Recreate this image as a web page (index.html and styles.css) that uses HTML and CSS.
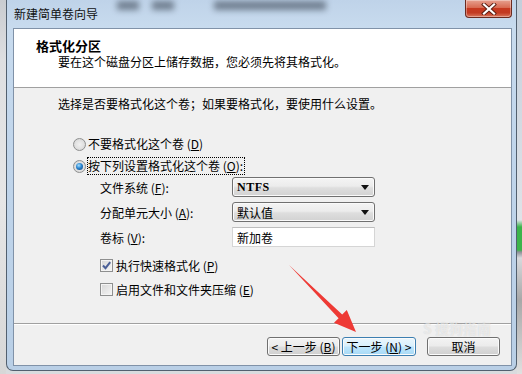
FILE: index.html
```html
<!DOCTYPE html>
<html lang="zh-CN">
<head>
    <meta charset="UTF-8">
    <meta name="viewport" content="width=device-width, initial-scale=1.0">
    <title>新建简单卷向导</title>
    <link rel="stylesheet" href="styles.css">
</head>
<body>
    <div class="screen">
        <div class="desk-left"></div>
        <div class="window">
            <div class="titlebar">
                <span class="title">新建简单卷向导</span>
                <div class="blur">
                    <span class="b1"></span>
                    <span class="b2"></span>
                    <span class="b3"></span>
                </div>
                <button class="close">
                    <svg width="16" height="12" viewBox="0 0 16 12">
                        <path d="M3 1.5 L13 10.5 M13 1.5 L3 10.5" stroke="#5a1d12" stroke-width="4" stroke-linecap="square"/>
                        <path d="M3 1.5 L13 10.5 M13 1.5 L3 10.5" stroke="#ffffff" stroke-width="2.2" stroke-linecap="square"/>
                    </svg>
                </button>
            </div>
            <div class="client">
                <div class="header">
                    <div class="h-title">格式化分区</div>
                    <div class="h-sub">要在这个磁盘分区上储存数据，您必须先将其格式化。</div>
                </div>
                <div class="content">
                    <p class="intro">选择是否要格式化这个卷；如果要格式化，要使用什么设置。</p>
                    <div class="radio-row first">
                        <span class="radio"></span>
                        <span class="opt">不要格式化这个卷 (<u>D</u>)</span>
                    </div>
                    <div class="radio-row">
                        <span class="radio on"></span>
                        <span class="opt focus">按下列设置格式化这个卷 (<u>O</u>):</span>
                    </div>
                    <div class="settings">
                        <span class="lbl">文件系统 (<u>F</u>):</span>
                        <div class="select mono">NTFS<span class="caret"></span></div>
                        <span class="lbl">分配单元大小 (<u>A</u>):</span>
                        <div class="select">默认值<span class="caret"></span></div>
                        <span class="lbl">卷标 (<u>V</u>):</span>
                        <div class="textbox">新加卷</div>
                    </div>
                    <div class="checks">
                        <div class="check-row">
                            <span class="box">
                                <svg width="11" height="11" viewBox="0 0 11 11">
                                    <path d="M2 5.5 L4.5 8.2 L9.2 2.2" fill="none" stroke="#4a5f97" stroke-width="2"/>
                                </svg>
                            </span>
                            <span>执行快速格式化 (<u>P</u>)</span>
                        </div>
                        <div class="check-row">
                            <span class="box"></span>
                            <span>启用文件和文件夹压缩 (<u>E</u>)</span>
                        </div>
                    </div>
                </div>
                <div class="footer">
                    <button class="btn back">&lt; 上一步 (<u>B</u>)</button>
                    <button class="btn next">下一步 (<u>N</u>) &gt;</button>
                    <button class="btn cancel">取消</button>
                </div>
            </div>
        </div>
        <div class="desk-right"></div>

        <span class="watermark">S 搜狗指南</span>
        <svg class="arrow" width="522" height="374" viewBox="0 0 522 374">
            <polygon points="289,265 342.2,314.6 346.8,310 356,332 334,322.8 338.6,318.2" fill="#ee3a35"/>
        </svg>
    </div>
</body>
</html>
```

FILE: styles.css
```css
body {
    margin: 0;
    font-family: "Noto Sans CJK SC", "Liberation Sans", sans-serif;
    font-size: 12px;
    color: #000;
}
.screen {
    position: relative;
    width: 522px;
    height: 374px;
    display: flex;
    overflow: hidden;
    background: #d9dbde;
}
.desk-left {
    width: 6px;
    background: linear-gradient(180deg, #c9ccd0 0, #dedfe1 60px, #e6e6e6 200px, #d7d7d7 100%);
}
.desk-right {
    width: 5px;
    background: linear-gradient(180deg, #c4cfdb 0, #dfe3e8 220px, #3cb44b 227px, #3cb44b 250px, #8c9097 252px, #d7d9dc 258px, #a8a8a8 300px, #e0e0e0 100%);
}
.window {
    width: 511px;
    height: 371px;
    box-sizing: border-box;
    padding: 0 4px 4px 6px;
    border: 1px solid #52606f;
    border-top: none;
    border-radius: 0 0 7px 7px;
    background: linear-gradient(180deg, #bfd3e9 0, #c8dbee 28px, #c0d5eb 160px, #b9cfe6 100%);
    display: flex;
    flex-direction: column;
}

/* title bar */
.titlebar {
    height: 28px;
    display: flex;
    align-items: flex-start;
}
.title {
    margin: 6px 0 0 1px;
    line-height: 16px;
    color: #111;
}
.blur {
    display: flex;
    margin: 1px 0 0 19px;
    filter: blur(3px);
    opacity: 0.6;
}
.blur span {
    height: 9px;
    background: #3b4654;
}
.blur .b1 { width: 22px; }
.blur .b2 { width: 22px; margin-left: 13px; }
.blur .b3 { width: 112px; margin-left: 40px; }
.close {
    margin-left: auto;
    width: 47px;
    height: 18px;
    padding: 0;
    border: 1px solid #6b2a1f;
    border-top: none;
    border-radius: 0 0 4px 4px;
    background: linear-gradient(180deg, #e7a190 0, #d86a52 45%, #c6381f 50%, #c23a22 75%, #d9765c 100%);
    box-shadow: inset 0 0 0 1px rgba(255, 255, 255, 0.35);
    display: flex;
    align-items: center;
    justify-content: center;
}

/* client area */
.client {
    height: 338px;
    box-sizing: border-box;
    border: 1px solid #8092a8;
    background: #f0f0f0;
    display: flex;
    flex-direction: column;
}
.header {
    height: 59px;
    box-sizing: border-box;
    background: #fff;
    border-bottom: 1px solid #a0a0a0;
    padding: 9px 0 0 22px;
}
.h-title {
    font-size: 13px;
    font-weight: bold;
    line-height: 16px;
}
.h-sub {
    margin-left: 22px;
    line-height: 16px;
}
.content {
    flex: 1;
    padding: 8px 0 0 44px;
}
.intro {
    margin: 0;
    line-height: 16px;
}
.radio-row {
    height: 22px;
    display: flex;
    align-items: center;
    margin-left: 15px;
}
.radio-row.first {
    margin-top: 21px;
}
.radio {
    width: 13px;
    height: 13px;
    box-sizing: border-box;
    border: 1px solid #8e8f8f;
    border-radius: 50%;
    background: radial-gradient(circle at 50% 50%, #f0f0f0 0, #e2e2e2 50%, #cfcfcf 100%);
    display: flex;
    align-items: center;
    justify-content: center;
}
.radio.on::after {
    content: "";
    width: 7px;
    height: 7px;
    border-radius: 50%;
    background: radial-gradient(circle at 40% 35%, #a6e0ff 0, #2a85cf 45%, #0e3f78 100%);
}
.opt {
    margin-left: 2px;
    line-height: 16px;
}
.focus {
    outline: 1px dotted #000;
    outline-offset: 0;
    padding-right: 1px;
}
.settings {
    margin-left: 42px;
    display: grid;
    grid-template-columns: 132px 143px;
    grid-auto-rows: 20px;
    row-gap: 5px;
    align-items: center;
}
.select, .textbox {
    height: 20px;
    box-sizing: border-box;
    display: flex;
    align-items: center;
    padding-left: 4px;
}
.select {
    border: 1px solid #707070;
    border-radius: 3px;
    background: linear-gradient(180deg, #f4f4f4 0, #ececec 45%, #dedede 55%, #d2d2d2 100%);
    box-shadow: inset 0 0 0 1px #fafafa;
}
.mono {
    font-family: "Liberation Serif", serif;
    font-weight: bold;
    letter-spacing: 0.5px;
}
.caret {
    margin-left: auto;
    margin-right: 5px;
    width: 0;
    height: 0;
    border-left: 4px solid transparent;
    border-right: 4px solid transparent;
    border-top: 5px solid #111;
}
.textbox {
    background: #fff;
    border: 1px solid #d5d5d5;
    border-top-color: #bdbdbd;
}
.checks {
    margin: 8px 0 0 42px;
    display: flex;
    flex-direction: column;
    gap: 4px;
}
.check-row {
    height: 20px;
    display: flex;
    align-items: center;
    gap: 3px;
}
.box {
    width: 13px;
    height: 13px;
    box-sizing: border-box;
    border: 1px solid #8e8f8f;
    background: linear-gradient(135deg, #d6d6d6 0, #f6f6f6 100%);
    box-shadow: inset 0 0 0 1px #f4f4f4;
    display: flex;
    align-items: center;
    justify-content: center;
}
.footer {
    height: 42px;
    box-sizing: border-box;
    border-top: 1px solid #a0a0a0;
    box-shadow: inset 0 1px 0 #fff;
    padding: 13px 11px 0 0;
    display: flex;
    justify-content: flex-end;
    align-items: flex-start;
}
.btn {
    height: 19px;
    width: 73px;
    padding: 0;
    font-family: inherit;
    font-size: 12px;
    line-height: 16px;
    color: #000;
    border: 1px solid #707070;
    border-radius: 3px;
    background: linear-gradient(180deg, #f3f3f3 0, #ebebeb 48%, #dddddd 52%, #cfcfcf 100%);
    box-shadow: inset 0 0 0 1px #fbfbfb;
}
.btn.next {
    width: 74px;
    margin-left: 2px;
    border-color: #3c7fb1;
    background: linear-gradient(180deg, #eaf6fd 0, #d9f0fc 48%, #bee6fd 52%, #a7d9f5 100%);
}
.btn.cancel {
    margin-left: 11px;
}
.watermark {
    position: absolute;
    left: 423px;
    top: 318px;
    font-size: 14px;
    font-weight: bold;
    color: rgba(255, 255, 255, 0.55);
    text-shadow: 0 0 1px rgba(0, 0, 0, 0.15);
}
.arrow {
    position: absolute;
    left: 0;
    top: 0;
    pointer-events: none;
}
```
